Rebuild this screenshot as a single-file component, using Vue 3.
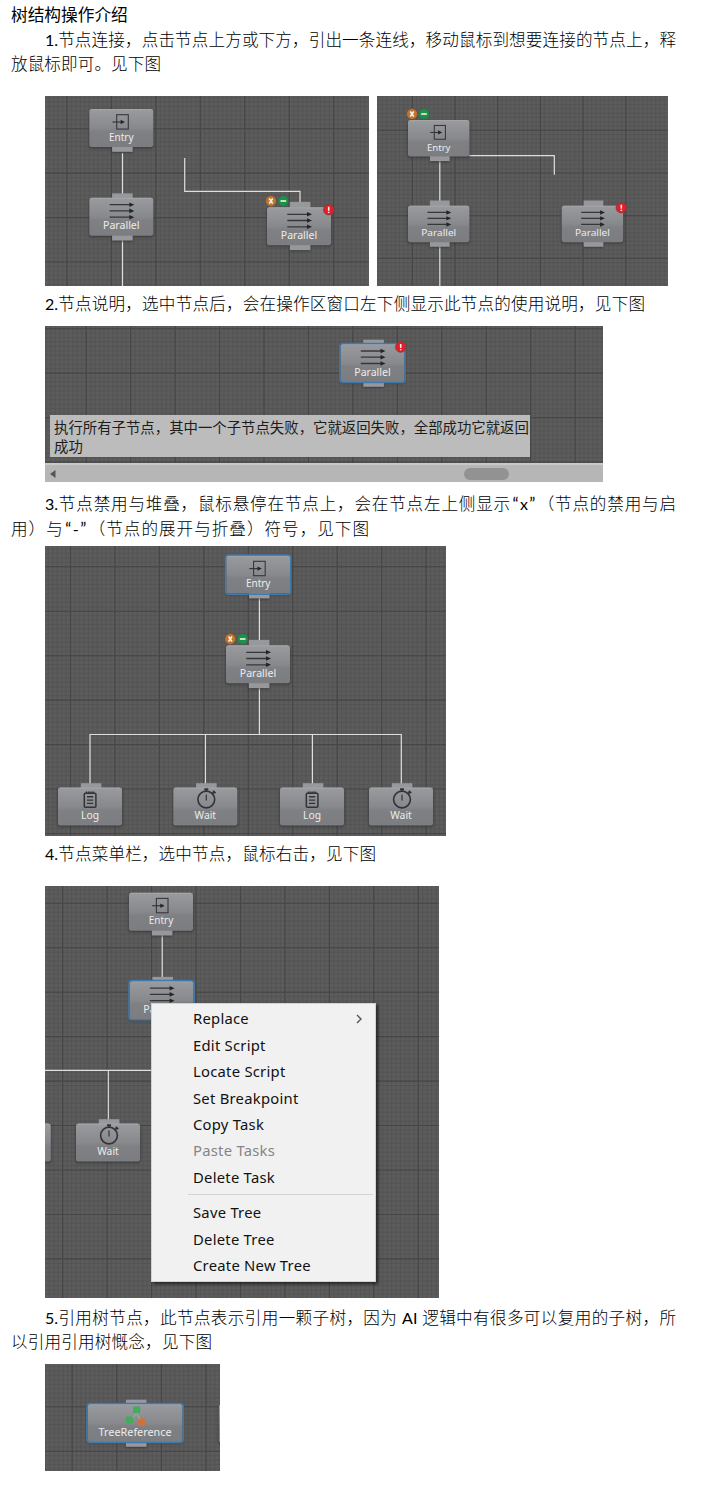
<script setup>
const node = (x, y, icon, extra = {}) => ({
  x, y, icon, w: 64, h: 38, s: 1, top: icon !== 'Entry', bottom: icon === 'Entry' || icon === 'Parallel',
  label: icon, ...extra,
})
const labelWidth = { Entry: 24.5, Parallel: 36.5, Log: 18, Wait: 21.5, TreeReference: 73 }

const figures = {
  connectUp: {
    w: 324, h: 190, gx: 22, gy: 32.7, step: 44.45,
    lines: ['M77.5 57V98', 'M77.5 143V190', 'M139.7 62V95.3H255V107'],
    nodes: [node(44.3, 13, 'Entry'), node(44.3, 101.7, 'Parallel'), node(222, 111.3, 'Parallel', { tall: true })],
    badges: [['x', 226, 105], ['minus', 238.3, 105], ['error', 283.7, 113.7]],
  },
  connectDown: {
    w: 291, h: 190, gx: 35.3, gy: 34.3, step: 42.7,
    lines: ['M62.8 64V105', 'M62.8 150V190', 'M92 59.7H177.3V78.7'],
    nodes: [
      node(31, 24, 'Entry', { s: 0.96 }),
      node(31, 109.7, 'Parallel', { s: 0.96, tall: true }),
      node(184.7, 109.7, 'Parallel', { s: 0.96, tall: true }),
    ],
    badges: [['x', 35, 18], ['minus', 47, 18], ['error', 244.3, 111.7]],
  },
  describe: {
    w: 558, h: 156, gx: 41.2, gy: 2.7, step: 44.45,
    lines: [],
    nodes: [node(295.5, 18, 'Parallel', { sel: true })],
    badges: [['error', 355.7, 21]],
  },
  fold: {
    w: 401, h: 290, gx: 25.5, gy: 20.8, step: 44.45,
    lines: ['M214.4 52V95', 'M214.4 142V188.5', 'M45 238V188.5H356.3V238', 'M160.4 188.5V238', 'M267.4 188.5V238'],
    nodes: [
      node(181.2, 9.6, 'Entry', { sel: true }), node(181, 99.3, 'Parallel', { tall: true }),
      node(13, 241.5, 'Log'), node(128.3, 241.5, 'Wait'), node(235, 241.5, 'Log'), node(324, 241.5, 'Wait'),
    ],
    badges: [['x', 185.3, 93], ['minus', 197.7, 93]],
  },
  menu: {
    w: 394, h: 412, gx: 17.7, gy: 17.3, step: 44.45,
    lines: ['M117.2 49V92', 'M0 184.4H110', 'M63.3 184.4V235'],
    nodes: [
      node(84, 6.7, 'Entry'), node(84.6, 95.2, 'Parallel', { sel: true }),
      node(31, 237.5, 'Wait'), node(-58.2, 237.5, '', { top: false }),
    ],
    badges: [],
  },
  reference: {
    w: 175, h: 107, gx: 27.2, gy: 42.7, step: 44.6,
    lines: [],
    nodes: [
      node(42.6, 40, 'TreeReference', { w: 95, bottom: true, sel: true }),
      node(173.8, 40.6, '', { top: false }),
    ],
    badges: [],
  },
}

function gridPath(start, step, size, cross, vertical) {
  let d = ''
  for (let p = start % step - step; p < size; p += step) {
    if (p < 0) continue
    const v = p.toFixed(2)
    d += vertical ? `M${v} 0V${cross}` : `M0 ${v}H${cross}`
  }
  return d
}
for (const f of Object.values(figures)) {
  const minor = f.step / 10
  f.minor = gridPath(f.gx + 10 * minor, minor, f.w, f.h, true) + gridPath(f.gy + 10 * minor, minor, f.h, f.w, false)
  f.major = gridPath(f.gx + f.step, f.step, f.w, f.h, true) + gridPath(f.gy + f.step, f.step, f.h, f.w, false)
}

const sections = [
  {
    cls: 's1', lines: [['1.节点连接，点击节点上方或下方，引出一条连线，移动鼠标到想要连接的节点上，释', 'full'], ['放鼠标即可。见下图', 'w150']],
    figs: [figures.connectUp, figures.connectDown],
  },
  { cls: 's2', lines: [['2.节点说明，选中节点后，会在操作区窗口左下侧显示此节点的使用说明，见下图', 'w600']], figs: [figures.describe], panel: 'describe' },
  {
    cls: 's3', lines: [['3.节点禁用与堆叠，鼠标悬停在节点上，会在节点左上侧显示“x”（节点的禁用与启', 'full'], ['用）与“-”（节点的展开与折叠）符号，见下图', 'w358']],
    figs: [figures.fold],
  },
  { cls: 's4', lines: [['4.节点菜单栏，选中节点，鼠标右击，见下图', 'w331']], figs: [figures.menu], panel: 'menu' },
  {
    cls: 's5', lines: [['5.引用树节点，此节点表示引用一颗子树，因为 AI 逻辑中有很多可以复用的子树，所', 'full'], ['以引用引用树慨念，见下图', 'w201']],
    figs: [figures.reference],
  },
]
const pieces = (text) => text.split(/([“”]|[0-9A-Za-z.-]+)/).filter(Boolean)
const pieceClass = (p) => ({ quote: /[“”]/.test(p), latin: /^[0-9A-Za-z.-]+$/.test(p) })

const menuItems = [
  { t: 'Replace', sub: true }, { t: 'Edit Script' }, { t: 'Locate Script' }, { t: 'Set Breakpoint' },
  { t: 'Copy Task' }, { t: 'Paste Tasks', off: true }, { t: 'Delete Task' }, { sep: true },
  { t: 'Save Tree' }, { t: 'Delete Tree' }, { t: 'Create New Tree' },
]
</script>

<template>
  <main class="doc" lang="zh-CN">
    <svg class="defs" width="0" height="0" aria-hidden="true">
      <defs>
        <linearGradient id="face" x1="0" y1="0" x2="0" y2="1">
          <stop offset="0" stop-color="#9a9b9f" />
          <stop offset="0.5" stop-color="#88898d" />
          <stop offset="0.6" stop-color="#7f8084" />
          <stop offset="1" stop-color="#7c7d81" />
        </linearGradient>
        <filter id="soft" x="-20%" y="-20%" width="140%" height="140%">
          <feGaussianBlur stdDeviation="1" />
        </filter>
        <g id="icon-Entry" fill="none" stroke="#36373a">
          <rect x="27.4" y="5.7" width="11.6" height="14.4" stroke-width="1.1" />
          <path d="M23.2 13H33" stroke-width="1.2" />
          <path d="M31.3 10.8L35.6 13L31.3 15.2Z" fill="#242527" stroke="none" />
        </g>
        <g id="icon-Parallel">
          <path d="M20.3 7H42M20.3 13.2H42M20.3 19.5H42" stroke="#36373a" stroke-width="1.3" />
          <path d="M40 4.7L45 7L40 9.3ZM40 10.9L45 13.2L40 15.5ZM40 17.2L45 19.5L40 21.8Z" fill="#242527" />
        </g>
        <g id="icon-Log" fill="none" stroke="#333437">
          <rect x="26.3" y="5.8" width="11.6" height="14" rx="1" stroke-width="1.5" />
          <path d="M27.8 5H36.8" stroke-width="1.8" stroke-dasharray="1.5 .7" />
          <path d="M29 9.3H35.2M29 12.6H35.2M29 15.9H35.2" stroke-width="1.4" />
        </g>
        <g id="icon-Wait" fill="none" stroke="#333437">
          <circle cx="33" cy="12" r="8.4" stroke-width="1.6" />
          <path d="M33 7V13" stroke-width="1.2" />
          <path d="M31 1.7H35M33 1.5V4" stroke-width="2" />
          <path d="M39 6.2L41 4.5M39.8 3.3L42.2 5.7" stroke-width="1.8" />
        </g>
        <g id="icon-TreeReference">
          <path d="M49 9L43 16M49 9L54 18" stroke="#a9abae" stroke-width="1" />
          <rect x="45.6" y="2.6" width="7" height="6.6" rx="1.2" fill="#3fae58" />
          <rect x="38.3" y="12.6" width="7" height="6.6" rx="1.2" fill="#3fae58" />
          <path d="M54.3 14.2L58.4 17.2L57 21.4H51.8L50.2 17.2Z" fill="#d2703a" stroke="#d2703a" stroke-linejoin="round" />
        </g>
      </defs>
    </svg>

    <h1 class="title">树结构操作介绍</h1>
    <section v-for="s in sections" :key="s.cls" :class="['section', s.cls]">
      <p class="para">
        <span v-for="([text, width], i) in s.lines" :key="i" :class="['line', width, { first: i === 0 }]"><span
          v-for="(p, k) in pieces(text)" :key="k" :class="pieceClass(p)">{{ p }}</span></span>
      </p>
      <div class="figures">
        <div v-for="(f, i) in s.figs" :key="i" class="figure">
          <svg class="graph" :width="f.w" :height="f.h" :viewBox="`0 0 ${f.w} ${f.h}`">
            <rect width="100%" height="100%" fill="#5c5c5c" />
            <path :d="f.minor" class="minor" />
            <path :d="f.major" class="major" />
            <path v-for="d in f.lines" :key="d" :d="d" class="link" />
            <g v-for="(n, j) in f.nodes" :key="j" :transform="`translate(${n.x} ${n.y}) scale(${n.s})`">
              <rect x="-0.5" y="1" :width="n.w + 1" :height="n.h + 0.5" rx="3" class="shadow" />
              <rect v-if="n.bottom" :x="n.w / 2 - 9.5" y="39.5" width="20.8" height="4.5" class="shadow" />
              <rect v-if="n.top" :x="n.w / 2 - 9.2" :y="n.tall ? -5.4 : -4.3" width="20.6" height="6" class="tab" />
              <rect v-if="n.bottom" :x="n.w / 2 - 9.2" y="37" width="20.6" height="5.8" class="tab" />
              <rect :width="n.w" :height="n.h" rx="2.2" fill="url(#face)" />
              <path :d="`M2 .6H${n.w - 2}`" class="shine" />
              <rect v-if="n.sel" x="-0.6" y="-0.6" :width="n.w + 1.2" :height="n.h + 1.2" rx="3" class="selected" />
              <template v-if="n.icon">
                <use :href="`#icon-${n.icon}`" />
                <text :x="n.w / 2" y="31.8" :textLength="labelWidth[n.icon]" lengthAdjust="spacingAndGlyphs" class="label">{{ n.label }}</text>
              </template>
            </g>
            <g v-for="[kind, x, y] in f.badges" :key="kind" :transform="`translate(${x} ${y})`">
              <circle r="5.4" :class="['badge', kind]" />
              <path v-if="kind === 'x'" d="M-1.7 -2.5L1.7 2.5M1.7 -2.5L-1.7 2.5" class="mark" />
              <path v-else-if="kind === 'minus'" d="M-2.8 0H2.8" class="mark" />
              <path v-else d="M0 -3V1M0 2V3.2" class="mark" />
            </g>
          </svg>

          <template v-if="s.panel === 'describe'">
            <div class="hint">执行所有子节点，其中一个子节点失败，它就返回失败，全部成功它就返回成功</div>
            <div class="scrollbar">
              <svg width="6" height="8" viewBox="0 0 6 8"><path d="M5.5 0V8L0 4Z" fill="#555" /></svg>
              <span class="thumb"></span>
            </div>
          </template>

          <div v-if="s.panel === 'menu'" class="menu">
            <template v-for="(m, k) in menuItems" :key="k">
              <div v-if="m.sep" class="sep"></div>
              <div v-else :class="['item', { off: m.off }]">
                <span>{{ m.t }}</span>
                <svg v-if="m.sub" width="6" height="10" viewBox="0 0 6 10"><path d="M1 1L5 5L1 9" fill="none" stroke="#555" stroke-width="1.4" /></svg>
              </div>
            </template>
          </div>
        </div>
      </div>
    </section>
  </main>
</template>

<style>
body { background: #fff; }
</style>

<style scoped>
.doc {
  box-sizing: border-box;
  width: 713px;
  height: 1492px;
  padding: 3px 0 0 11px;
  overflow: hidden;
  background: #fff;
  color: #000;
  font-family: Lato, "Noto Sans CJK SC", sans-serif;
  font-size: 16.6px;
  line-height: 25px;
}
.defs { display: block; }
.title { margin: 0; height: 24px; font-size: 16.7px; font-weight: 400; }
.para { margin: 0; }
.line { display: block; height: 25px; white-space: nowrap; text-align-last: justify; font-weight: 300; }
.line > span { white-space: pre-wrap; }
.line > .latin { font-weight: 400; font-size: 16px; }
.line > .quote { display: inline-block; width: 9px; text-align: center; text-align-last: center; font-weight: 400; }
.first { margin-left: 34px; }
.full { width: 631px; }
.line.full:not(.first) { width: 665px; }
.w150 { width: 150px; }
.w600 { width: 600px; }
.w358 { width: 358px; }
.w331 { width: 331px; }
.w201 { width: 201px; }
.figures { display: flex; gap: 8px; margin-left: 34px; }
.figure { position: relative; overflow: hidden; }
.graph { display: block; }
.s1 .figures { margin-top: 19px; }
.s2 { padding-top: 5px; }
.s2 .figures { margin-top: 10px; }
.s3 { padding-top: 9px; }
.s3 .figures { margin-top: 5px; }
.s4 { padding-top: 5px; }
.s4 .figures { margin-top: 20px; }
.s5 { padding-top: 7px; }
.s5 .figures { margin-top: 9px; }

.minor { fill: none; stroke: #535353; stroke-width: 0.8; }
.major { fill: none; stroke: #464646; stroke-width: 1.1; }
.link { fill: none; stroke: #dedede; stroke-width: 1.2; }
.shadow { fill: #2c2c2c; opacity: 0.6; filter: url(#soft); }
.tab { fill: #97989c; }
.shine { stroke: #a8a9ad; stroke-width: 0.8; }
.selected { fill: none; stroke: #4179ab; stroke-width: 1.5; }
.label {
  fill: #ececec;
  font-family: "Noto Sans", sans-serif;
  font-size: 10.2px;
  text-anchor: middle;
}
.badge { stroke: #4a4a4a; stroke-width: 0.4; }
.badge.x { fill: #c2742c; }
.badge.minus { fill: #1c9149; }
.badge.error { fill: #e01f2b; }
.mark { fill: none; stroke: #f5f0e8; stroke-width: 1.6; }

.hint {
  position: absolute;
  left: 5px;
  top: 89px;
  box-sizing: border-box;
  width: 480px;
  height: 42px;
  padding: 3px 0 0 4px;
  background: #bcbcbc;
  color: #1c1c1c;
  font: 14.4px/18.5px "Noto Sans CJK SC", sans-serif;
  white-space: normal;
}
.scrollbar {
  position: absolute;
  left: 0;
  bottom: 0;
  box-sizing: border-box;
  display: flex;
  align-items: center;
  width: 100%;
  height: 19px;
  padding-left: 5px;
  border-top: 2px solid #c9c9c9;
  background: #b6b6b6;
}
.thumb { width: 45px; height: 12px; margin-left: 408px; border-radius: 6px; background: #929292; }

.menu {
  position: absolute;
  left: 106px;
  top: 117px;
  box-sizing: border-box;
  width: 225px;
  height: 279px;
  padding-top: 1.4px;
  border: 1px solid #d2d2d2;
  background: #f1f1f1;
  box-shadow: 2px 2px 3px rgba(0, 0, 0, 0.6);
  color: #111;
  font: 14.8px/26.4px "Noto Sans", sans-serif;
  letter-spacing: 0.25px;
}
.item { display: flex; align-items: center; justify-content: space-between; height: 26.4px; padding: 0 13px 0 41px; }
.off { color: #858585; }
.sep { height: 1px; margin: 4px 2px 4px 36px; background: #d3d3d3; }
</style>
